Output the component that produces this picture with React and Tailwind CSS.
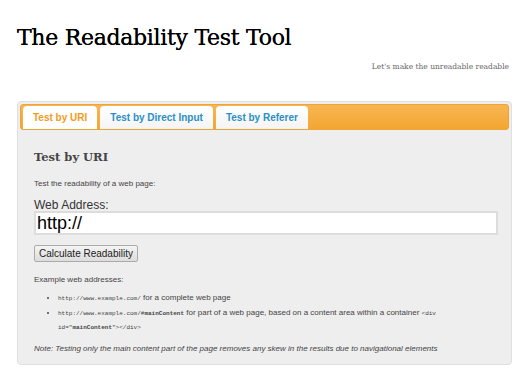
import React, { useState } from 'react';

const serif = { fontFamily: '"DejaVu Serif", serif' };

export default function App() {
  const [tab, setTab] = useState('uri');
  const [url, setUrl] = useState('http://');

  const tabs = [
    { id: 'uri', label: 'Test by URI' },
    { id: 'direct', label: 'Test by Direct Input' },
    { id: 'referer', label: 'Test by Referer' },
  ];

  return (
    <div className="w-[528px] h-[379px] bg-white font-['Liberation_Sans',Arial,sans-serif] text-[#333]">
      <div className="px-[17px] pt-[24px]">
        <h1 className="text-[22px] leading-[28px] text-black font-['DejaVu_Serif',serif] tracking-[-0.3px] [text-shadow:0_0_0.4px_#000]">The Readability Test Tool</h1>
        <p className="text-right pr-[2px] mt-[10px] text-[7.5px] leading-[10px] text-[#666] font-['DejaVu_Serif',serif]">Let's make the unreadable readable</p>

        <div className="mt-[29px] w-[495px] bg-[#eee] border border-[#e0e0e0] rounded-[4px] p-[2px] pb-[10px]">
          <div className="flex items-end gap-[3px] h-[26px] px-[2px] pt-[3px] rounded-[3px] bg-gradient-to-b from-[#f7b652] to-[#f4a62f] border border-[#eea43a]">
            {tabs.map(t => (
              <button
                key={t.id}
                onClick={() => setTab(t.id)}
                className={
                  'h-[23px] px-[10px] rounded-t-[4px] text-[10px] font-bold leading-[23px] ' +
                  (tab === t.id
                    ? 'bg-white text-[#f29b1d]'
                    : 'bg-gradient-to-b from-white to-[#f4f4f4] text-[#2b8fc6]')
                }
              >
                {t.label}
              </button>
            ))}
          </div>

          <div className="px-[14px] pt-[19px]">
            <h2 className="text-[11.5px] leading-[16px] font-bold text-[#444]" style={serif}>Test by URI</h2>
            <p className="mt-[14px] text-[8px] leading-[10px] text-[#444]">Test the readability of a web page:</p>
            <label className="block mt-[10px] text-[12px] leading-[12px] text-[#333]">Web Address:</label>
            <input
              value={url}
              onChange={e => setUrl(e.target.value)}
              className="block w-[464px] h-[24px] px-[1px] bg-white border-2 border-[#ddd] text-[18px] leading-[20px] text-black outline-none"
            />
            <button className="mt-[10px] h-[17px] px-[4px] text-[10px] leading-[13px] text-[#222] bg-gradient-to-b from-[#f4f4f4] to-[#ddd] border border-[#aaa] rounded-[2px]">
              Calculate Readability
            </button>
            <p className="mt-[10px] text-[8px] leading-[11px] text-[#444]">Example web addresses:</p>
            <ul className="mt-[6px] pl-[24px] list-disc text-[8px] leading-[13.5px] text-[#444]">
              <li>
                <code className="font-['Liberation_Mono',monospace] text-[6px]">http://www.example.com/</code> for a complete web page
              </li>
              <li>
                <code className="font-['Liberation_Mono',monospace] text-[6px]">http://www.example.com/#<b>mainContent</b></code> for part of a web page, based on a content area within a container <code className="font-['Liberation_Mono',monospace] text-[6px]">&lt;div id="<b>mainContent</b>"&gt;&lt;/div&gt;</code>
              </li>
            </ul>
            <p className="mt-[8px] text-[8px] leading-[11px] italic text-[#444]">Note: Testing only the main content part of the page removes any skew in the results due to navigational elements</p>
          </div>
        </div>
      </div>
    </div>
  );
}
